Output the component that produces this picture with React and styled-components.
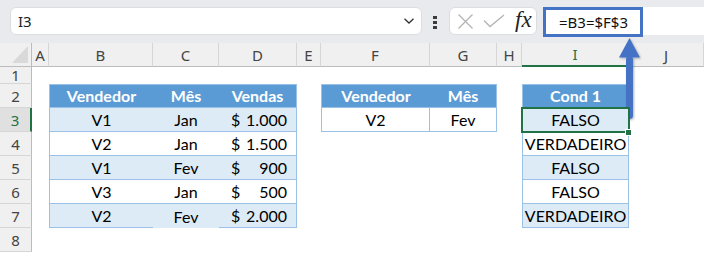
import styled, { createGlobalStyle, css } from 'styled-components'

const GlobalStyle = createGlobalStyle`
  body {
    margin: 0;
    background: #ffffff;
  }
`

const COLS = [
  { id: 'A', w: 17 },
  { id: 'B', w: 104 },
  { id: 'C', w: 66 },
  { id: 'D', w: 78 },
  { id: 'E', w: 24 },
  { id: 'F', w: 109 },
  { id: 'G', w: 67 },
  { id: 'H', w: 25 },
  { id: 'I', w: 107 },
  { id: 'J', w: 75 },
]

const ROWS = [
  { n: 1, h: 17 },
  { n: 2, h: 24 },
  { n: 3, h: 24 },
  { n: 4, h: 24 },
  { n: 5, h: 24 },
  { n: 6, h: 24 },
  { n: 7, h: 24 },
  { n: 8, h: 24 },
]

// tables on the sheet: c0 = column index (A = 0), r0 = first row number
const TABLES = [
  {
    c0: 1,
    r0: 2,
    head: ['Vendedor', 'Mês', 'Vendas'],
    body: [
      ['V1', 'Jan', 1000],
      ['V2', 'Jan', 1500],
      ['V1', 'Fev', 900],
      ['V3', 'Jan', 500],
      ['V2', 'Fev', 2000],
    ],
    banded: true,
    money: 2,
    openBottom: 1,
  },
  {
    c0: 5,
    r0: 2,
    head: ['Vendedor', 'Mês'],
    body: [['V2', 'Fev']],
    innerLines: true,
  },
  {
    c0: 8,
    r0: 2,
    head: ['Cond 1'],
    body: [['FALSO'], ['VERDADEIRO'], ['FALSO'], ['FALSO'], ['VERDADEIRO']],
    banded: true,
  },
]

const ACTIVE = { col: 'I', row: 3 }

const BORDER = '1px solid #9BC2E6'
const GREEN = '#217346'

const Page = styled.div`
  position: relative;
  width: 704px;
  height: 253px;
  overflow: hidden;
  background: #ffffff;
`

const TopBar = styled.div`
  display: flex;
  align-items: flex-start;
  height: 43px;
  box-sizing: border-box;
  padding: 7px 0 0 10px;
  background: #e9eaee;
  font-family: 'Noto Sans', 'Open Sans', sans-serif;
  font-size: 15px;
  color: #222;
`

const NameBox = styled.div`
  display: flex;
  align-items: center;
  justify-content: space-between;
  width: 412px;
  height: 28px;
  box-sizing: border-box;
  padding: 0 6px 0 7px;
  background: #ffffff;
  border: 1px solid #dcdde1;
  border-radius: 6px;
`

const Dots = styled.div`
  display: flex;
  flex-direction: column;
  gap: 2px;
  margin: 9px 12px 0 11px;

  span {
    width: 4px;
    height: 3px;
    background: #3c3c3c;
  }
`

const FxBox = styled.div`
  display: flex;
  align-items: center;
  gap: 9px;
  width: 88px;
  height: 28px;
  box-sizing: border-box;
  padding: 0 0 0 7px;
  margin-right: 6px;
  background: #ffffff;
  border: 1px solid #dcdde1;
  border-radius: 6px;
`

const Fx = styled.span`
  font-family: 'Liberation Serif', 'DejaVu Serif', serif;
  font-style: italic;
  font-size: 23px;
  line-height: 1;
  color: #222;
  margin: -3px 0 0 1px;
`

const FormulaBar = styled.div`
  flex: 1;
  height: 28px;
  background: #ffffff;
  border-radius: 6px 0 0 6px;
`

const Highlight = styled.div`
  display: flex;
  align-items: center;
  width: 100px;
  height: 30px;
  box-sizing: border-box;
  padding-left: 13px;
  border: 3px solid #4472c4;
  color: #111;
`

const Sheet = styled.div`
  display: grid;
  grid-template-columns: 32px ${COLS.map((c, i) => (i === COLS.length - 1 ? '1fr' : `${c.w}px`)).join(' ')};
  grid-template-rows: 24px ${ROWS.map((r) => `${r.h}px`).join(' ')};
`

const Corner = styled.div`
  position: relative;
  background: #f0f0f0;
  border-right: 1px solid #bcbcbc;
  border-bottom: 1px solid #bcbcbc;

  &::after {
    content: '';
    position: absolute;
    right: 3px;
    bottom: 3px;
    border-left: 16px solid transparent;
    border-bottom: 17px solid #d9d9d9;
  }
`

const ColHead = styled.div`
  display: flex;
  align-items: center;
  justify-content: center;
  box-sizing: border-box;
  background: #f0f0f0;
  border-right: 1px solid #d6d6d6;
  border-bottom: ${(p) => (p.$active ? `2px solid ${GREEN}` : '1px solid #bcbcbc')};
  font-family: 'Noto Sans', 'Open Sans', sans-serif;
  font-size: 15px;
  color: ${(p) => (p.$active ? GREEN : '#444')};
`

const RowHead = styled.div`
  display: flex;
  align-items: center;
  justify-content: center;
  box-sizing: border-box;
  background: ${(p) => (p.$active ? '#e0e0e0' : '#f0f0f0')};
  border-bottom: 1px solid #d6d6d6;
  border-right: ${(p) => (p.$active ? `2px solid ${GREEN}` : '1px solid #bcbcbc')};
  font-family: 'Noto Sans', 'Open Sans', sans-serif;
  font-size: 15px;
  color: ${(p) => (p.$active ? GREEN : '#444')};
`

const FILLS = {
  head: '#5b9bd5',
  band: '#ddebf7',
  plain: '#ffffff',
}

const Cell = styled.div`
  position: relative;
  display: flex;
  align-items: flex-end;
  justify-content: center;
  box-sizing: border-box;
  padding-bottom: 2px;
  white-space: nowrap;
  font-family: Lato, 'Liberation Sans', sans-serif;
  font-size: 16px;
  line-height: 18px;
  color: ${(p) => (p.$fill === 'head' ? '#ffffff' : '#000000')};
  font-weight: ${(p) => (p.$fill === 'head' ? 700 : 400)};
  background: ${(p) => FILLS[p.$fill] || 'transparent'};
  border-top: ${(p) => (p.$bt ? BORDER : 'none')};
  border-bottom: ${(p) => (p.$bb ? BORDER : 'none')};
  border-left: ${(p) => (p.$bl ? BORDER : 'none')};
  border-right: ${(p) => (p.$br ? BORDER : 'none')};

  ${(p) =>
    p.$selected &&
    css`
      z-index: 2;
      outline: 2px solid ${GREEN};
      outline-offset: -1px;

      &::after {
        content: '';
        position: absolute;
        right: -3px;
        bottom: -4px;
        width: 5px;
        height: 5px;
        background: ${GREEN};
        box-shadow: 0 0 0 1px #ffffff;
      }
    `}
`

const Money = styled.div`
  display: flex;
  justify-content: space-between;
  width: 100%;
  padding: 0 9px 0 12px;
  box-sizing: border-box;
`

const Arrow = styled.svg`
  position: absolute;
  left: 614px;
  top: 34px;
  overflow: visible;
`

const fmt = (n) => n.toLocaleString('de-DE')

function cellAt(row, ci) {
  for (const t of TABLES) {
    const lr = row - t.r0
    const lc = ci - t.c0
    const ncols = t.head.length
    if (lr < 0 || lr > t.body.length || lc < 0 || lc >= ncols) continue
    const isHead = lr === 0
    const value = isHead ? t.head[lc] : t.body[lr - 1][lc]
    const last = lr === t.body.length
    return {
      value,
      money: !isHead && t.money === lc,
      fill: isHead ? 'head' : t.banded && lr % 2 === 1 ? 'band' : 'plain',
      bt: isHead,
      bl: lc === 0,
      br: lc === ncols - 1 || (t.innerLines && !isHead),
      bb: !(last && t.openBottom === lc),
    }
  }
  return null
}

function SheetCell({ row, ci }) {
  const spec = cellAt(row, ci)
  const selected = COLS[ci].id === ACTIVE.col && row === ACTIVE.row
  if (!spec) return <Cell $selected={selected} />
  return (
    <Cell
      $fill={spec.fill}
      $bt={spec.bt}
      $bb={spec.bb}
      $bl={spec.bl}
      $br={spec.br}
      $selected={selected}
    >
      {spec.money ? (
        <Money>
          <span>$</span>
          <span>{fmt(spec.value)}</span>
        </Money>
      ) : (
        spec.value
      )}
    </Cell>
  )
}

function Chevron() {
  return (
    <svg width='12' height='8' viewBox='0 0 12 8'>
      <path d='M1.5 1.8 L6 6 L10.5 1.8' fill='none' stroke='#333' strokeWidth='1.3' />
    </svg>
  )
}

function Cross() {
  return (
    <svg width='17' height='17' viewBox='0 0 17 17'>
      <path d='M1.5 1.5 L15.5 15.5 M15.5 1.5 L1.5 15.5' stroke='#b4b4b4' strokeWidth='1.3' />
    </svg>
  )
}

function Check() {
  return (
    <svg width='22' height='14' viewBox='0 0 22 14'>
      <path d='M1 6.5 L7 12.5 L21 1' fill='none' stroke='#b4b4b4' strokeWidth='1.3' />
    </svg>
  )
}

export default function App() {
  return (
    <Page>
      <GlobalStyle />
      <TopBar>
        <NameBox>
          <span>I3</span>
          <Chevron />
        </NameBox>
        <Dots>
          <span />
          <span />
          <span />
        </Dots>
        <FxBox>
          <Cross />
          <Check />
          <Fx>fx</Fx>
        </FxBox>
        <FormulaBar>
          <Highlight>=B3=$F$3</Highlight>
        </FormulaBar>
      </TopBar>
      <Sheet>
        <Corner />
        {COLS.map((c) => (
          <ColHead key={c.id} $active={c.id === ACTIVE.col}>
            {c.id}
          </ColHead>
        ))}
        {ROWS.map((r) => [
          <RowHead key={`h${r.n}`} $active={r.n === ACTIVE.row}>
            {r.n}
          </RowHead>,
          ...COLS.map((c, ci) => <SheetCell key={`${c.id}${r.n}`} row={r.n} ci={ci} />),
        ])}
      </Sheet>
      <Arrow width='32' height='90' viewBox='0 0 32 90'>
        <defs>
          <filter id='sh' x='-50%' y='-20%' width='200%' height='140%'>
            <feDropShadow dx='1' dy='1' stdDeviation='1' floodColor='#000' floodOpacity='0.3' />
          </filter>
        </defs>
        <g filter='url(#sh)' fill='#4472c4'>
          <path d='M15.5 4 L26 23.5 L5 23.5 Z' />
          <rect x='12' y='22' width='7' height='63' rx='3.5' />
        </g>
      </Arrow>
    </Page>
  )
}
